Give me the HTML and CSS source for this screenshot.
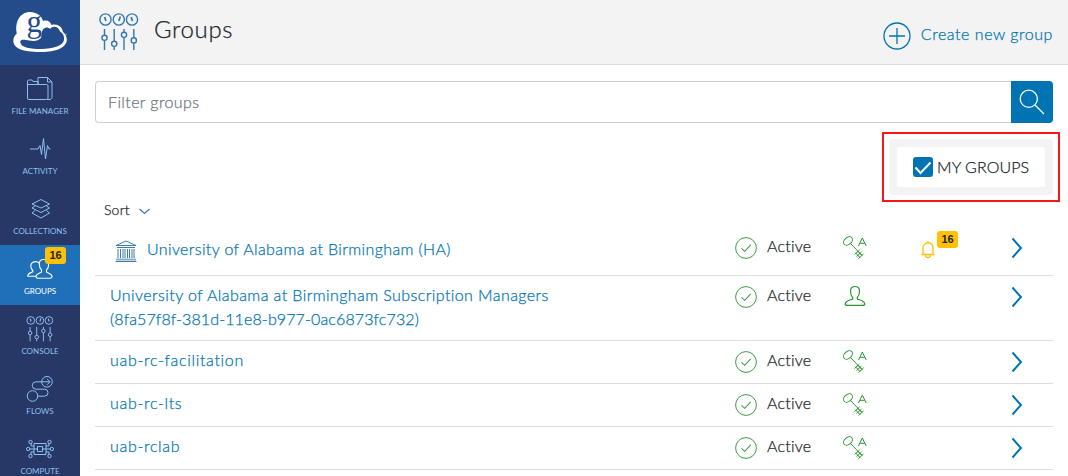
FILE: index.html
```html
<!DOCTYPE html>
<html lang="en">
<head>
<meta charset="utf-8">
<title>Groups</title>
<link rel="stylesheet" href="styles.css">
</head>
<body>
<svg class="sprite" aria-hidden="true">
  <symbol id="i-console" viewBox="0 0 40 38">
    <g fill="none" stroke="currentColor" stroke-width="1.4">
      <circle cx="6.500" cy="6.500" r="5.600"/><circle cx="19.800" cy="6.500" r="5.600"/><circle cx="33" cy="6.500" r="5.600"/>
      <path d="M5.700 4l1.200 4M21.300 3.500L19.800 8M32.200 4l1.200 4" stroke-width="1.700"/>
      <path d="M5.500 16v6.200M5.500 27.400v9.600M15.200 16v12.200M15.200 33.400V37M25 16v3.200M25 24.400V37M34.800 16v8.800M34.800 30v7"/>
      <circle cx="5.500" cy="24.800" r="2.600"/><circle cx="15.200" cy="30.800" r="2.600"/><circle cx="25" cy="21.800" r="2.600"/><circle cx="34.800" cy="27.400" r="2.600"/>
    </g>
  </symbol>
  <symbol id="i-check" viewBox="0 0 22 22">
    <circle cx="11" cy="11" r="10.400" fill="none" stroke="currentColor"/>
    <path d="M6.500 11.300l3.200 3 6-6.500" fill="none" stroke="currentColor" stroke-width="1.100"/>
  </symbol>
  <symbol id="i-key" viewBox="0 0 24 24">
    <g fill="none" stroke="currentColor">
      <ellipse cx="5" cy="5" rx="5" ry="3.500" transform="rotate(-40 5 5)"/>
      <path d="M7.500 7.500L19 19.500M11.500 18.500l5-4.500M13.500 20.500l5-4.500M15.500 22.500l5-4.500M12.500 16.800l4.500 4.800M14.500 15l4.500 4.500"/>
      <path d="M15.500 10L19.300 2 23.200 10M17 7.300h4.700"/>
    </g>
  </symbol>
  <symbol id="i-person" viewBox="0 0 22 22">
    <path d="M11 1.500C7.800 1.500 6.500 3.400 6.500 6c0 3 1 5.300 2.200 6.400v1.500C7 15 1.500 15.300 1.200 19c0 1 1 1.400 2.300 1.400h15c1.300 0 2.300-.4 2.300-1.400-.3-3.700-5.800-4-7.500-5.100v-1.500c1.200-1.100 2.200-3.400 2.200-6.400 0-2.600-1.300-4.500-4.500-4.500z" fill="none" stroke="currentColor" stroke-width="1.200"/>
  </symbol>
  <symbol id="i-next" viewBox="0 0 12 22">
    <path d="M1.500 1.500L10 11 1.500 20.500" fill="none" stroke="currentColor" stroke-width="2"/>
  </symbol>
</svg>
<div class="app">
  <nav class="sidebar">
    <a class="brand">
      <svg width="56" height="42" viewBox="0 0 56 42">
        <path fill="#fff" d="M17 0c6.500 0 11.500 3.500 13 9 4-1.500 7.500.5 8.500 4 6-1.500 10.500 1.500 11.500 7 2.500 2 3.800 4.500 3.800 8C53.500 36 42 40 29 40 14 40 .5 38 .3 29c0-3.500 1.300-5.500 3.500-7.500C1.500 10 7 0 17 0z"/>
        <path fill="#244b8a" d="M7.200 30c0-3 4-2.500 9-1.500 5 .9 9 .5 11.800-2.500 1-5 .5-10 5.500-10.500 1.800 0 2.500.5 3.500 1.500 2.500-3.500 8.500-3 10 2.500 3 1.500 4.500 4.500 4 8.500-1 5.500-10 9-23 9-10 0-20-1-20.800-7z"/>
        <text x="13.500" y="20" class="brand-g">g</text>
        <circle cx="53" cy="22.500" r=".8" fill="#8fa7cc"/>
      </svg>
    </a>
    <a class="item">
      <svg width="28" height="26" viewBox="0 0 28 26" fill="none" stroke="currentColor"><path d="M1.500 9V5l1-1h3.500l1 1.500h5V9M1.500 8.500h19a1.500 1.500 0 0 1 1.500 1.500v12a1.500 1.500 0 0 1-1.500 1.500H3A1.500 1.500 0 0 1 1.500 22zM12 8V1.500h9.500l4.500 4.500V21.500l-1.500 2h-3.500M21.500 1.500V6H26"/></svg>
      <span>FILE MANAGER</span></a>
    <a class="item">
      <svg width="28" height="26" viewBox="0 0 28 26" fill="none" stroke="currentColor"><path d="M4 13h8l2-3.500 1.500 9L17.500 2.500 19.500 23 21.500 9.500 23 13h1.500"/></svg>
      <span>ACTIVITY</span></a>
    <a class="item">
      <svg width="28" height="26" viewBox="0 0 28 26" fill="none" stroke="currentColor"><path d="M15 3.500L23.500 8 15 12 6 8zM9 10l-3 2 9 4.500 8.500-4.500-3-2M9 14.500l-3 2.500 9 5 8.500-5-3-2.500"/></svg>
      <span>COLLECTIONS</span></a>
    <a class="item active">
      <svg width="28" height="26" viewBox="0 0 28 26" fill="none" stroke="currentColor" stroke-width="1.100"><path d="M17.500 3.500c-3 0-4.200 2-4.200 4.500 0 3 1 5 2.200 6v2c-2 1.300-5.500 1.500-5.500 4.800 0 1 .8 1.500 2 1.500h12c1.200 0 2-.5 2-1.500 0-3.300-3.500-3.500-5.500-4.800v-2c1.200-1 2.200-3 2.200-6 0-2.500-1.500-4.500-5.200-4.500z"/><path d="M13.200 7C10.500 4.500 4.800 5.500 4.800 10c0 2 .8 3.500 2 4.500v1.300c-2 1-5 1.200-5 4.500h8.200"/></svg>
      <span>GROUPS</span><b class="badge nav-badge">16</b></a>
    <a class="item">
      <svg width="28" height="26"><use href="#i-console"/></svg>
      <span>CONSOLE</span></a>
    <a class="item">
      <svg width="28" height="26" viewBox="0 0 28 26" fill="none" stroke="currentColor"><circle cx="6.500" cy="20" r="5.300"/><circle cx="21" cy="5.800" r="5.300"/><path d="M24 5.800H10a3.700 3.700 0 0 0 0 7.400h8.500a3.500 3.500 0 0 1 0 7H12M21 2.800l3 3-3 3"/></svg>
      <span>FLOWS</span></a>
    <a class="item">
      <svg width="28" height="26" viewBox="0 0 28 26" fill="none" stroke="currentColor"><path d="M8 7.500h12v11H8zM11.500 10.500h5v5h-5zM5 7v3h3M23 7v3h-3M5 19v-3h3M23 19v-3h-3M4 13h7.500M16.500 13H24"/><circle cx="4.500" cy="6" r="1.700"/><circle cx="23.500" cy="6" r="1.700"/><circle cx="4.500" cy="20" r="1.700"/><circle cx="23.500" cy="20" r="1.700"/><circle cx="2.200" cy="13" r="1.700"/><circle cx="25.800" cy="13" r="1.700"/></svg>
      <span>COMPUTE</span></a>
  </nav>
  <main>
    <header>
      <svg class="head-icon" width="40" height="38"><use href="#i-console"/></svg>
      <h1>Groups</h1>
      <a class="create">
        <svg width="28" height="28" viewBox="0 0 28 28" fill="none" stroke="currentColor"><circle cx="14" cy="14" r="13" stroke-width="1.300"/><path d="M6 14h16M14 6v16" stroke-width="1.300"/></svg>
        <span>Create new group</span></a>
    </header>
    <div class="content">
      <div class="search"><div class="field">Filter groups</div>
        <button><svg width="26" height="26" viewBox="0 0 26 26" fill="none" stroke="#fff" stroke-width="1.300"><circle cx="9.800" cy="9.800" r="8.600"/><path d="M16 16l9 9"/></svg></button></div>
      <div class="filters">
        <div class="filter"><label><i class="box"><svg width="20" height="20" viewBox="0 0 20 20"><path d="M2.500 10.500l5 5.500L17.500 5.500" fill="none" stroke="#fff" stroke-width="2"/></svg></i><span>MY GROUPS</span></label><i class="callout"></i></div>
      </div>
      <div class="sort"><span>Sort</span><svg width="11" height="7" viewBox="0 0 11 7"><path d="M.5 1l5 4.500 5-4.500" fill="none" stroke="#3f7cab" stroke-width="1.200"/></svg></div>
      <div class="list">
        <div class="row first">
          <div class="name"><svg width="22" height="22" viewBox="0 0 22 22" fill="none" stroke="#3f7cab"><path d="M1 5.500L11 1l10 4.500zM2 7.500h18M3 9v9M5.500 9v9M8 9v9M10 9v9M12.500 9v9M14.500 9v9M17 9v9M19 9v9"/><path d="M1 19.500h20" stroke="#86acd0" stroke-width="2"/><path d="M.5 21.500h21"/></svg><span>University of Alabama at Birmingham (HA)</span></div>
          <div class="status"><svg width="22" height="22"><use href="#i-check"/></svg><span>Active</span></div>
          <div class="role"><svg width="24" height="24"><use href="#i-key"/></svg></div>
          <div class="notice"><svg width="14" height="18" viewBox="0 0 14 18" fill="none" stroke="#ffc107" stroke-width="1.300"><path d="M.5 13.500h13M2 13.300V7c0-3 2-5 5-5s5 2 5 5v6.300M7 0v2M4.700 14c0 3.500 4.600 3.500 4.600 0"/></svg><b class="badge">16</b></div>
          <svg class="next" width="12" height="22"><use href="#i-next"/></svg>
        </div>
        <div class="row">
          <div class="name"><span>University of Alabama at Birmingham Subscription Managers<br><em>(8fa57f8f-381d-11e8-b977-0ac6873fc732)</em></span></div>
          <div class="status"><svg width="22" height="22"><use href="#i-check"/></svg><span>Active</span></div>
          <div class="role member"><svg width="22" height="22"><use href="#i-person"/></svg></div><div></div>
          <svg class="next" width="12" height="22"><use href="#i-next"/></svg>
        </div>
        <div class="row">
          <div class="name"><span class="slug">uab-rc-facilitation</span></div>
          <div class="status"><svg width="22" height="22"><use href="#i-check"/></svg><span>Active</span></div>
          <div class="role"><svg width="24" height="24"><use href="#i-key"/></svg></div><div></div>
          <svg class="next" width="12" height="22"><use href="#i-next"/></svg>
        </div>
        <div class="row">
          <div class="name"><span class="slug">uab-rc-lts</span></div>
          <div class="status"><svg width="22" height="22"><use href="#i-check"/></svg><span>Active</span></div>
          <div class="role"><svg width="24" height="24"><use href="#i-key"/></svg></div><div></div>
          <svg class="next" width="12" height="22"><use href="#i-next"/></svg>
        </div>
        <div class="row">
          <div class="name"><span class="slug">uab-rclab</span></div>
          <div class="status"><svg width="22" height="22"><use href="#i-check"/></svg><span>Active</span></div>
          <div class="role"><svg width="24" height="24"><use href="#i-key"/></svg></div><div></div>
          <svg class="next" width="12" height="22"><use href="#i-next"/></svg>
        </div>
      </div>
    </div>
  </main>
</div>
</body>
</html>
```
FILE: styles.css
```css
* { box-sizing: border-box; }
body { margin: 0; background: #fff; color: #212529; font: 300 16px/24px Lato, sans-serif; overflow: hidden; }
svg { display: block; flex: none; }
.sprite { display: none; }
.app { display: flex; height: 476px; overflow: hidden; }
.sidebar { width: 80px; flex: none; background: #273766; }
.brand { display: block; height: 65px; padding: 12px 0 0 13px; background: #244b8a; }
.brand svg { overflow: visible; }
.brand-g { font: 31px "Liberation Serif", serif; fill: #244b8a; }
.item { display: flex; flex-direction: column; align-items: center; height: 60px; padding-top: 11px; position: relative; color: #8fc1ee; }
.item svg { height: 26px; }
.item span { font-size: 8px; font-weight: 400; line-height: 10px; margin-top: 4px; white-space: nowrap; }
.item.active { background: #1f70b8; color: #fff; }
.badge { display: block; width: 21px; height: 17px; border-radius: 3px; background: #ffc107; color: #212529; font: 700 11px/17px "Liberation Sans", sans-serif; text-align: center; }
.nav-badge { position: absolute; left: 45px; top: 2px; }
main { flex: 1; min-width: 0; }
h1, .create, .field, .filter, .sort, .name, .status { -webkit-text-stroke: .25px currentColor; }
header { display: flex; height: 65px; padding: 0 15px 0 19px; background: #f3f3f3; border-bottom: 1px solid #dcdde4; }
.head-icon { margin-top: 13px; color: #3477ae; }
h1 { margin: 13px 0 0 15px; font-size: 24px; line-height: 32px; font-weight: 300; letter-spacing: .65px; }
.create { display: flex; margin: 22px 0 0 auto; color: #0074b3; }
.create span { margin-left: 10px; letter-spacing: .55px; }
.content { padding: 16px 15px 0; }
.search { display: flex; height: 42px; }
.field { flex: 1; border: 1px solid #cdcfd8; border-right: 0; border-radius: 4px 0 0 4px; padding: 8px 12px; color: #6c757d; letter-spacing: .4px; }
button { width: 42px; border: 0; border-radius: 0 4px 4px 0; background: #0074b3; padding: 8px; }
.filters { display: flex; justify-content: flex-end; margin-top: 16px; }
.filter { position: relative; width: 164px; height: 56px; padding: 8px; background: #f3f3f3; border-radius: 4px; }
.filter label { display: flex; align-items: center; height: 40px; padding-left: 16px; background: #fff; border-radius: 3px; }
.box { width: 20px; height: 20px; background: #0074b3; border-radius: 3px; }
.filter span { margin-left: 4px; letter-spacing: .1px; }
.callout { position: absolute; left: -7px; top: -7px; width: 178px; height: 70px; border: 2px solid #f91616; }
.sort { display: flex; align-items: center; height: 32px; padding-left: 9px; font-size: 14px; }
.sort span { margin-top: -2px; letter-spacing: .2px; }
.sort svg { margin: 1px 0 0 9px; }
.row { display: grid; grid-template-columns: 640px 108px 78px 90px 12px; min-height: 43px; padding: 8px 0; border-bottom: 1px solid #dcdde4; }
.row.first { height: 49px; }
.name { display: flex; padding-left: 15px; color: #0074b3; letter-spacing: .42px; }
.name span { margin: -1px 0 1px; }
.name svg { margin: 5px 10px 0 5px; }
.first .name span { margin-top: 2px; letter-spacing: .37px; }
.name em { font-style: normal; letter-spacing: .12px; }
.name .slug { letter-spacing: .68px; }
.status { display: flex; }
.status svg { margin-top: 2px; color: #3d9d42; }
.status span { margin: -1px 0 0 10px; letter-spacing: .2px; }
.role { color: #2c9632; padding-top: 1px; }
.role.member { padding-left: 1px; }
.notice { display: flex; }
.notice svg { margin-top: 6px; }
.notice .badge { margin: -4px 0 0 2px; }
.next { margin-top: 2px; color: #0074b3; }
```
